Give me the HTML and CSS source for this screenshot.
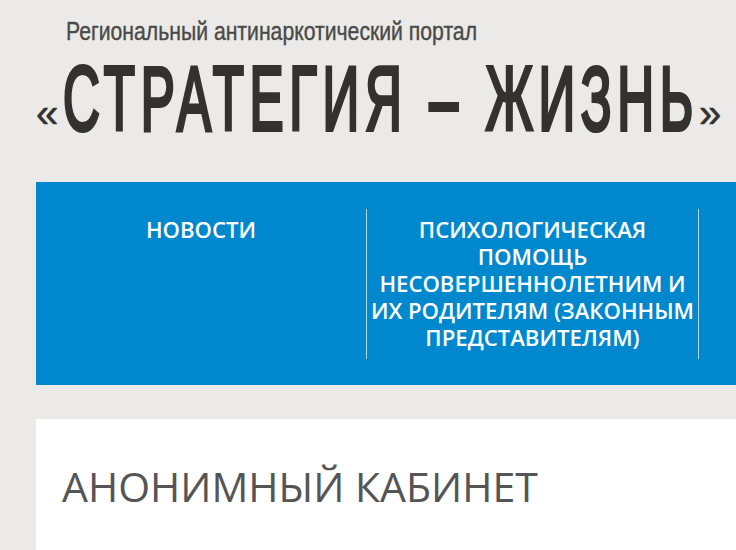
FILE: index.html
```html
<!DOCTYPE html>
<html lang="ru">
<head>
<meta charset="utf-8">
<title>Стратегия – жизнь</title>
<link rel="stylesheet" href="styles.css">
</head>
<body>
<header class="logo">
  <div class="tagline"><span class="tagline-text">Региональный антинаркотический портал</span></div>
  <div class="brand"><span class="quote">«</span><span class="brand-text">СТРАТЕГИЯ – ЖИЗНЬ</span><span class="quote">»</span></div>
</header>
<nav class="nav">
  <a class="nav-item nav-news">НОВОСТИ</a>
  <a class="nav-item nav-help">ПСИХОЛОГИЧЕСКАЯ ПОМОЩЬ НЕСОВЕРШЕННОЛЕТНИМ И ИХ РОДИТЕЛЯМ (ЗАКОННЫМ ПРЕДСТАВИТЕЛЯМ)</a>
</nav>
<main class="card">
  <h1 class="title">АНОНИМНЫЙ КАБИНЕТ</h1>
</main>
</body>
</html>
```
FILE: styles.css
```css
html, body {
  margin: 0;
  padding: 0;
  height: 550px;
  overflow: hidden;
}
body {
  background: #ebeae8;
  font-family: "Open Sans", sans-serif;
  padding-left: 36px;
}
.logo {
  height: 182px;
  overflow: hidden;
  color: #33322e;
  font-family: "Liberation Sans", sans-serif;
}
.tagline {
  padding: 16px 0 0 30px;
  height: 30px;
  font-size: 26px;
  line-height: 30px;
  white-space: nowrap;
  color: #4a4a47;
}
.tagline-text {
  display: inline-block;
  -webkit-text-stroke: 0.4px #4a4a47;
  transform: scaleX(0.815);
  transform-origin: left center;
}
.brand {
  display: flex;
  align-items: flex-end;
  white-space: nowrap;
  padding-top: 16px;
  height: 74px;
}
.brand-text {
  display: inline-block;
  font-size: 90px;
  line-height: 74px;
  letter-spacing: 10px;
  word-spacing: 4px;
  -webkit-text-stroke: 4px #33322e;
  transform: scaleX(0.567);
  transform-origin: left center;
  margin-left: 5px;
  width: 636px;
}
.quote {
  font-size: 40px;
  line-height: 46px;
  width: 22px;
  -webkit-text-stroke: 0.5px #33322e;
}
.nav {
  display: flex;
  height: 203px;
  width: 700px;
  padding-top: 27px;
  box-sizing: border-box;
  background: #0088ce;
  align-items: flex-start;
}
.nav-item {
  box-sizing: border-box;
  height: 150px;
  color: #fff;
  font-size: 22.15px;
  font-weight: 600;
  line-height: 27px;
  text-align: center;
  padding-top: 7px;
}
.nav-news {
  width: 331px;
  border-right: 1px solid #b5d8ec;
}
.nav-help {
  width: 332px;
  padding: 7px 3px 0;
  border-right: 1px solid #b5d8ec;
}
.card {
  margin-top: 34px;
  height: 131px;
  background: #fff;
  padding: 39px 0 0 26px;
  box-sizing: border-box;
}
.title {
  margin: 0;
  color: #555;
  font-size: 41px;
  font-weight: 400;
  line-height: 56px;
}
```
